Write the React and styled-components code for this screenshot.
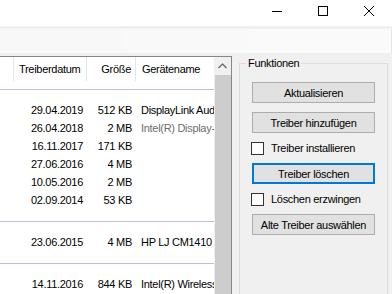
import React from 'react'
import styled, { createGlobalStyle } from 'styled-components'

const GlobalStyle = createGlobalStyle`
  html, body { margin: 0; padding: 0; background: #f0f0f0; overflow: hidden; }
  body {
    font-family: "Liberation Sans", Arial, sans-serif;
    font-size: 11px;
    letter-spacing: -0.3px;
    color: #000;
  }
`

const Window = styled.div`
  width: 392px;
  height: 294px;
  display: flex;
  flex-direction: column;
  overflow: hidden;
  background: #f0f0f0;
`

const TitleBar = styled.div`
  height: 26px;
  flex-shrink: 0;
  background: #fff;
  display: flex;
  justify-content: flex-end;
`

const CaptionButton = styled.div`
  width: 46px;
  height: 22px;
  display: flex;
  align-items: center;
  justify-content: center;
`

const Toolbar = styled.div`
  margin-top: 3px;
  height: 24px;
  flex-shrink: 0;
  display: flex;
`

const ToolSegment = styled.div`
  width: ${p => p.$w}px;
  flex: ${p => (p.$w ? 'none' : '1')};
  background: ${p => p.$bg || '#f9f9f9'};
`

const Main = styled.div`
  margin-top: 3px;
  flex: 1;
  display: flex;
  min-height: 0;
`

const ListView = styled.div`
  width: 232px;
  box-sizing: border-box;
  background: #fff;
  border-top: 1px solid #828790;
  border-right: 1px solid #828790;
  display: flex;
`

const ListContent = styled.div`
  flex: 1;
  overflow: hidden;
  white-space: nowrap;
`

const Header = styled.div`
  height: 24px;
  display: flex;
`

const HeaderCell = styled.div`
  width: ${p => p.$w}px;
  flex-shrink: 0;
  box-sizing: border-box;
  border-right: ${p => (p.$last ? 'none' : '1px solid #e5e5e5')};
  line-height: 24px;
  text-align: ${p => p.$align || 'left'};
  padding: ${p => p.$pad || '0'};
  overflow: hidden;
`

const Body = styled.div`
  padding-top: 8px;
`

const Group = styled.div`
  border-top: 1px solid #b9c1d7;
  padding: 11px 0 12px;
`

const Row = styled.div`
  height: 18px;
  line-height: 18px;
  display: flex;
`

const Cell = styled.div`
  width: ${p => p.$w}px;
  flex-shrink: 0;
  box-sizing: border-box;
  text-align: ${p => p.$align || 'left'};
  padding: ${p => p.$pad || '0'};
  overflow: hidden;
  color: ${p => (p.$dim ? '#6d6d6d' : '#000')};
`

const ScrollBar = styled.div`
  width: 17px;
  flex-shrink: 0;
  background: #f0f0f0;
  display: flex;
  flex-direction: column;
`

const ArrowBox = styled.div`
  height: 18px;
  display: flex;
  align-items: center;
  justify-content: center;
`

const Thumb = styled.div`
  flex: 1;
  margin-left: 1px;
  background: #cdcdcd;
`

const Panel = styled.div`
  flex: 1;
  padding: 0 4px 0 7px;
`

const GroupBox = styled.div`
  margin-top: 7px;
  height: 300px;
  box-sizing: border-box;
  border: 1px solid #dcdcdc;
`

const Legend = styled.div`
  display: table;
  margin: -8px 0 0 6px;
  padding: 0 2px;
  background: #f0f0f0;
  line-height: 14px;
`

const Controls = styled.div`
  display: flex;
  flex-direction: column;
  align-items: flex-start;
  padding: 12px 0 0 12px;
`

const Button = styled.button`
  width: 123px;
  height: 21px;
  box-sizing: border-box;
  padding: 0;
  background: #e1e1e1;
  border: ${p => (p.$focused ? '2px solid #0078d7' : '1px solid #adadad')};
  font: inherit;
  letter-spacing: inherit;
  color: #000;
  & + & { margin-top: 9px; }
`

const CheckRow = styled.label`
  height: 30px;
  margin-left: -1px;
  display: flex;
  align-items: center;
  gap: 7px;
`

const CheckBox = styled.span`
  width: 13px;
  height: 13px;
  box-sizing: border-box;
  border: 1px solid #333;
  background: #fff;
`

const groups = [
  [
    ['29.04.2019', '512 KB', 'DisplayLink Audio'],
    ['26.04.2018', '2 MB', 'Intel(R) Display-Audio', true],
    ['16.11.2017', '171 KB', ''],
    ['27.06.2016', '4 MB', ''],
    ['10.05.2016', '2 MB', ''],
    ['02.09.2014', '53 KB', ''],
  ],
  [['23.06.2015', '4 MB', 'HP LJ CM1410 Series']],
  [['14.11.2016', '844 KB', 'Intel(R) Wireless Bluetooth(R)']],
]

const App = () => (
  <Window>
    <GlobalStyle />
    <TitleBar>
      <CaptionButton>
        <svg width="10" height="10" viewBox="0 0 10 10">
          <path d="M0 5.5H10" stroke="#000" strokeWidth="1" />
        </svg>
      </CaptionButton>
      <CaptionButton>
        <svg width="10" height="10" viewBox="0 0 10 10">
          <rect x="0.5" y="0.5" width="9" height="9" fill="none" stroke="#000" strokeWidth="1" />
        </svg>
      </CaptionButton>
      <CaptionButton>
        <svg width="10" height="10" viewBox="0 0 10 10">
          <path d="M0 0L10 10M10 0L0 10" stroke="#000" strokeWidth="1" />
        </svg>
      </CaptionButton>
    </TitleBar>

    <Toolbar>
      <ToolSegment $w={122} $bg="#f8f8f8" />
      <ToolSegment $w={127} $bg="#f9f9f9" />
      <ToolSegment $bg="#fafafa" />
      <ToolSegment $w={1} $bg="#e6e6e6" />
    </Toolbar>

    <Main>
      <ListView>
        <ListContent>
          <Header>
            <HeaderCell $w={14} />
            <HeaderCell $w={73} $pad="0 0 0 5px">Treiberdatum</HeaderCell>
            <HeaderCell $w={49} $align="right" $pad="0 4px 0 0">Größe</HeaderCell>
            <HeaderCell $w={120} $last $pad="0 0 0 6px">Gerätename</HeaderCell>
          </Header>
          <Body>
            {groups.map((rows, g) => (
              <Group key={g}>
                {rows.map(([date, size, name, dim]) => (
                  <Row key={date}>
                    <Cell $w={14} />
                    <Cell $w={73} $align="right" $pad="0 4px 0 0">{date}</Cell>
                    <Cell $w={49} $align="right" $pad="0 4px 0 0">{size}</Cell>
                    <Cell $w={120} $pad="0 0 0 5px" $dim={dim}>{name}</Cell>
                  </Row>
                ))}
              </Group>
            ))}
          </Body>
        </ListContent>
        <ScrollBar>
          <ArrowBox>
            <svg width="9" height="6" viewBox="0 0 9 6">
              <path d="M0.5 5L4.5 1L8.5 5" fill="none" stroke="#606060" strokeWidth="1.2" />
            </svg>
          </ArrowBox>
          <Thumb />
        </ScrollBar>
      </ListView>

      <Panel>
        <GroupBox>
          <Legend>Funktionen</Legend>
          <Controls>
            <Button>Aktualisieren</Button>
            <Button>Treiber hinzufügen</Button>
            <CheckRow>
              <CheckBox />
              Treiber installieren
            </CheckRow>
            <Button $focused>Treiber löschen</Button>
            <CheckRow>
              <CheckBox />
              Löschen erzwingen
            </CheckRow>
            <Button>Alte Treiber auswählen</Button>
          </Controls>
        </GroupBox>
      </Panel>
    </Main>
  </Window>
)

export default App
